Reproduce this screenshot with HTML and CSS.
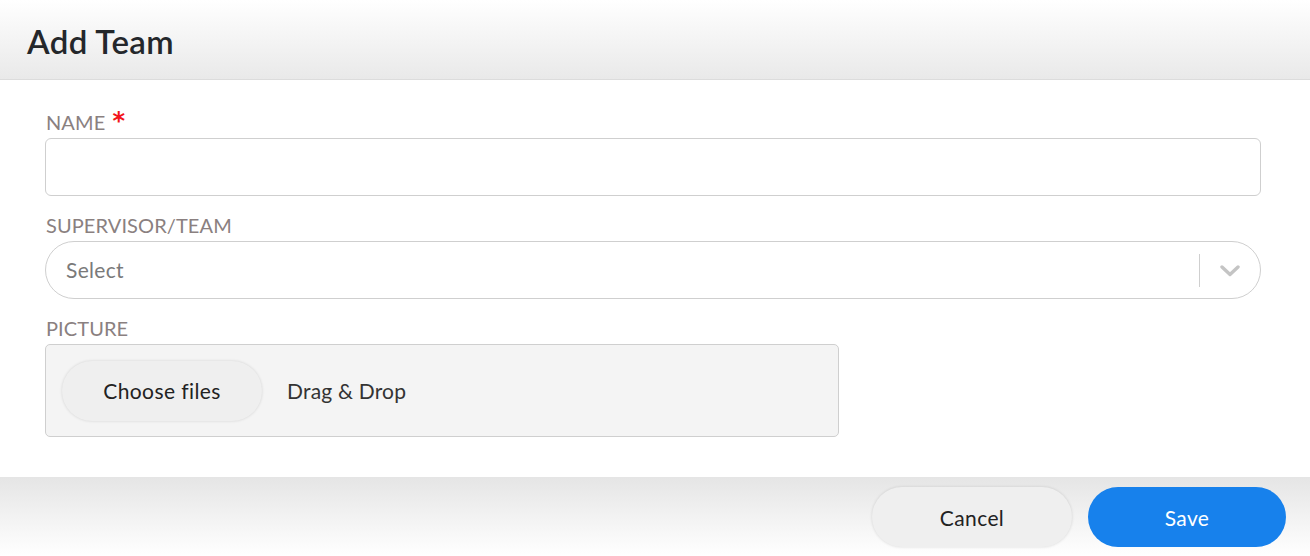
FILE: index.html
```html
<!DOCTYPE html>
<html>
<head>
<meta charset="utf-8">
<link rel="stylesheet" href="styles.css">
</head>
<body>
<div class="modal">
  <header class="modal-header">
    <h1 class="title">Add Team</h1>
  </header>
  <main class="modal-body">
    <div class="field">
      <label class="label">NAME <span class="req">*</span></label>
      <div class="input"></div>
    </div>
    <div class="field">
      <label class="label">SUPERVISOR/TEAM</label>
      <div class="select">
        <span class="placeholder">Select</span>
        <span class="select-ind">
          <span class="sep"></span>
          <svg class="chev" width="20" height="12" viewBox="0 0 20 12"><path d="M2 2 L10 9.5 L18 2" fill="none" stroke="#c4c4c4" stroke-width="3.4" stroke-linecap="round" stroke-linejoin="round"/></svg>
        </span>
      </div>
    </div>
    <div class="field">
      <label class="label">PICTURE</label>
      <div class="dropzone">
        <button class="btn btn-light">Choose files</button>
        <span class="dd">Drag &amp; Drop</span>
      </div>
    </div>
  </main>
  <footer class="modal-footer">
    <button class="btn btn-light">Cancel</button>
    <button class="btn btn-primary">Save</button>
  </footer>
</div>
</body>
</html>
```
FILE: styles.css
```css
* { box-sizing: border-box; }
html, body { margin: 0; padding: 0; background: #fff; }
body { font-family: "Lato", "Open Sans", sans-serif; }
.modal { width: 1310px; height: 556px; display: flex; flex-direction: column; }
.modal-header {
  height: 80px;
  background: linear-gradient(#ffffff, #e9e9e9);
  border-bottom: 1px solid #dcdcdc;
  padding: 0 27px;
  display: flex;
  align-items: center;
}
.title { margin: 0; font-size: 33px; font-weight: 600; color: #24272b; letter-spacing: 0.4px; padding-top: 3px; }
.modal-body { flex: 1; padding: 32px 49px 0 45px; }
.field { margin-bottom: 19px; }
.field:last-child { margin-bottom: 0; }
.label { display: block; font-size: 20px; line-height: 20px; color: #8a8080; margin-bottom: 6px; margin-left: 1px; letter-spacing: 0.1px; }
.req { color: #f2141b; font-family: "DejaVu Sans", sans-serif; font-weight: 700; font-size: 24px; line-height: 20px; margin-left: 2px; vertical-align: top; position: relative; top: -1px; }
.input { height: 58px; border: 1px solid #cfcfcf; border-radius: 6px; background: #fff; }
.select {
  height: 58px; border: 1px solid #cfcfcf; border-radius: 29px; background: #fff;
  display: flex; align-items: center; padding-left: 20px;
}
.placeholder { flex: 1; font-size: 21px; color: #7a7a7a; letter-spacing: 0.3px; margin-top: -1px; }
.select-ind { display: flex; align-items: center; height: 100%; }
.sep { width: 1px; height: 33px; background: #cfcfcf; }
.chev { margin: 2px 20px 0 20px; }
.dropzone {
  width: 794px; height: 93px; background: #f4f4f4; border: 1px solid #cfcfcf; border-radius: 5px;
  display: flex; align-items: center; padding-left: 16px;
}
.dd { font-size: 21px; color: #333; margin-left: 25px; letter-spacing: 0.2px; }
.btn {
  font-family: inherit; font-size: 21px; width: 200px; height: 60px; border-radius: 30px;
  border: none; cursor: pointer; letter-spacing: 0.4px;
}
.btn-light { background: #efefef; color: #222; box-shadow: 0 0 3px rgba(0,0,0,0.14); }
.btn-primary { background: #1781ec; color: #fff; width: 198px; }
.modal-footer {
  height: 79px;
  background: linear-gradient(#e5e5e5, #ffffff);
  display: flex; justify-content: flex-end; align-items: flex-start; gap: 16px;
  padding: 10px 24px 0 0;
}
```
